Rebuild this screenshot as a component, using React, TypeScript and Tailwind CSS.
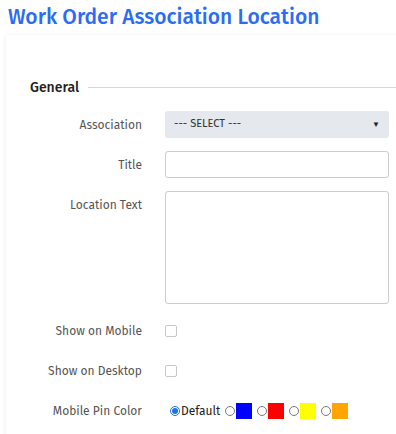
import React from "react";

const font = { fontFamily: '"Fira Sans", Roboto, "Noto Sans", sans-serif' };

function Label({ children, top }: { children: React.ReactNode; top?: boolean }) {
  return (
    <div
      className={`w-[136px] shrink-0 text-right text-[12px] text-[#555] ${top ? "pt-[5px]" : "flex items-center justify-end"}`}
    >
      {children}
    </div>
  );
}

function Radio({ checked }: { checked?: boolean }) {
  return checked ? (
    <span className="inline-flex h-[10px] w-[10px] items-center justify-center rounded-full border border-[#1a73e8] bg-white">
      <span className="h-[6px] w-[6px] rounded-full bg-[#1a73e8]" />
    </span>
  ) : (
    <span className="inline-block h-[10px] w-[10px] rounded-full border border-[#777] bg-white" />
  );
}

export default function App() {
  return (
    <div className="h-[434px] w-[396px] overflow-hidden bg-white" style={font}>
      <h1 className="pl-[8px] pt-[2px] text-[21px] font-medium leading-[30px] text-[#2b6cf5]">
        Work Order Association Location
      </h1>
      <div className="ml-[6px] mt-[3px] w-[420px] bg-white pt-[42px] shadow-[-1px_0_4px_rgba(0,0,0,0.06)]">
        <div className="flex items-center pl-[24px]">
          <span className="text-[14px] font-medium text-[#222]">General</span>
          <span className="ml-[9px] h-px flex-1 bg-[#c4dafc]" />
        </div>
        <div className="mt-[13px] flex flex-col gap-[13px]">
          <div className="flex h-[27px] gap-[23px]">
            <Label>Association</Label>
            <div className="flex w-[224px] items-center justify-between rounded-[3px] bg-[#e5e8ec] pl-[9px] pr-[9px] text-[11px] text-[#333]">
              <span>--- SELECT ---</span>
              <span className="text-[8px] text-[#222]">▼</span>
            </div>
          </div>
          <div className="flex h-[27px] gap-[23px]">
            <Label>Title</Label>
            <div className="w-[224px] rounded-[3px] border border-[#ccc] bg-white" />
          </div>
          <div className="flex h-[113px] gap-[23px]">
            <Label top>Location Text</Label>
            <div className="w-[224px] rounded-[3px] border border-[#ccc] bg-white" />
          </div>
          <div className="flex h-[27px] gap-[23px]">
            <Label>Show on Mobile</Label>
            <div className="flex items-center">
              <span className="h-[12px] w-[12px] rounded-[2px] border border-[#c8c8c8] bg-white" />
            </div>
          </div>
          <div className="flex h-[27px] gap-[23px]">
            <Label>Show on Desktop</Label>
            <div className="flex items-center">
              <span className="h-[12px] w-[12px] rounded-[2px] border border-[#c8c8c8] bg-white" />
            </div>
          </div>
          <div className="flex h-[27px] gap-[23px]">
            <Label>Mobile Pin Color</Label>
            <div className="flex items-center pl-[5px] text-[12px] text-[#222]">
              <Radio checked />
              <span className="ml-[1px]">Default</span>
              <span className="ml-[5px] flex"><Radio /></span>
              <span className="ml-[1px] h-[16px] w-[16px] bg-[#0000ff]" />
              <span className="ml-[5px] flex"><Radio /></span>
              <span className="ml-[1px] h-[16px] w-[16px] bg-[#ff0000]" />
              <span className="ml-[5px] flex"><Radio /></span>
              <span className="ml-[1px] h-[16px] w-[16px] bg-[#ffff00]" />
              <span className="ml-[5px] flex"><Radio /></span>
              <span className="ml-[1px] h-[16px] w-[16px] bg-[#ffa500]" />
            </div>
          </div>
        </div>
        <div className="h-[20px]" />
      </div>
    </div>
  );
}
